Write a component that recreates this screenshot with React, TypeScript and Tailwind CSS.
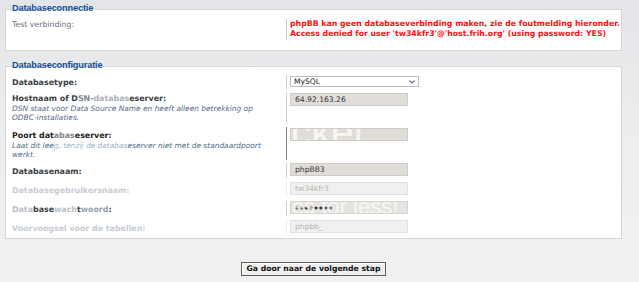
import React from "react"

const body = { fontFamily: '"DejaVu Sans", Verdana, sans-serif' }
const legendFont = { fontFamily: '"Liberation Sans", Arial, sans-serif' }

function Legend({ children }: { children: React.ReactNode }) {
  return (
    <div className="-mt-[7px] pl-[6px] text-[9.2px] leading-[10px] font-bold text-[#115098] tracking-[-0.15px]" style={legendFont}>
      {children}
    </div>
  )
}

function Field({
  value,
  tone = "dark",
  children,
}: {
  value?: string
  tone?: "dark" | "faded" | "pass"
  children?: React.ReactNode
}) {
  const cls =
    tone === "dark"
      ? "bg-[#e1ded9] border-[#cfccc7] text-[#333]"
      : tone === "pass"
        ? "bg-[#e6e4e0] border-[#d6d3cf] text-[#333]"
        : "bg-[#f1f0ee] border-[#e2e0dd] text-[#b4b4b4]"
  return (
    <div className={`relative overflow-hidden w-[118px] h-[13px] border pl-[4px] text-[7.6px] leading-[11px] ${cls}`}>
      {value}
      {children}
    </div>
  )
}

export default function App() {
  return (
    <div
      className="relative w-[639px] h-[282px] overflow-hidden bg-gradient-to-b from-[#e3e5e8] via-[#eceeef] to-[#f1f1f1]"
      style={body}
    >
      <div className="px-[5px] pt-[9px] w-[627px]">
        {/* Databaseconnectie */}
        <div className="bg-white border border-[#d6d6d6] pb-[11px]">
          <Legend>Databaseconnectie</Legend>
          <div className="flex mt-[6px]">
            <div className="w-[280px] shrink-0 pl-[6px] pt-[1px] text-[7.8px] leading-[10px] text-[#6b7480]">Test verbinding:</div>
            <div className="border-l border-[#c9c9c9] pl-[3px] text-[7.8px] leading-[10px] font-bold text-[#ff1010] whitespace-nowrap">
              <p>phpBB kan geen databaseverbinding maken, zie de foutmelding hieronder.</p>
              <p>Access denied for user 'tw34kfr3'@'host.frih.org' (using password: YES)</p>
            </div>
          </div>
        </div>

        {/* Databaseconfiguratie */}
        <div className="mt-[15px] bg-white border border-[#d6d6d6] pb-[3px]">
          <Legend>Databaseconfiguratie</Legend>

          {/* Databasetype */}
          <div className="flex mt-[5px] h-[14px]">
            <div className="w-[280px] shrink-0 pl-[6px] pt-[1px] text-[7.9px] leading-[13px] font-bold text-[#3a3d44]">Databasetype:</div>
            <div className="border-l border-[#d0d0d0] pl-[3px]">
              <div className="mt-[1px] w-[129px] h-[11px] border border-[#b9bcc2] bg-white flex items-center justify-between pl-[3px] pr-[3px] text-[7.6px] text-[#222]">
                <span>MySQL</span>
                <svg width="6" height="4" viewBox="0 0 6 4">
                  <polyline points="0.5,0.5 3,3 5.5,0.5" fill="none" stroke="#5a6f90" strokeWidth="1.1" />
                </svg>
              </div>
            </div>
          </div>

          {/* Hostnaam */}
          <div className="flex mt-[3px]">
            <div className="w-[280px] shrink-0 pl-[6px] pr-[8px] pt-[2px] pb-[1px]">
              <p className="text-[7.9px] leading-[10px] font-bold text-[#3a3d44]">
                Hostnaam of D<span className="text-[#7d838c]">SN-</span><span className="text-[#a9afb8]">databas</span>eserver:
              </p>
              <p className="text-[7.45px] leading-[9px] italic text-[#55698a]">
                DSN staat voor Data Source Name en heeft alleen betrekking op ODBC-installaties.
              </p>
            </div>
            <div className="border-l border-[#d0d0d0] pl-[3px]">
              <div className="mt-[1px]">
                <Field value="64.92.163.26" />
              </div>
            </div>
          </div>

          {/* Poort */}
          <div className="flex mt-[4px]">
            <div className="w-[280px] shrink-0 pl-[6px] pr-[8px] pt-[4px] pb-[1px]">
              <p className="text-[7.9px] leading-[10px] font-bold text-[#222]">
                Poort dat<span className="text-[#7d838c]">abas</span>eserver:
              </p>
              <p className="text-[7.45px] leading-[9px] italic text-[#55698a]">
                Laat dit lee<span className="text-[#a3b0c2]">g, tenzij de databas</span>eserver niet met de standaardpoort werkt.
              </p>
            </div>
            <div className="border-l border-[#7a7a7a] pl-[3px]">
              <div className="mt-[1px]">
                <Field>
                  {/* watermark fragment */}
                  <span
                    className="absolute left-[-22px] top-[-17px] text-[40px] leading-[40px] text-white/75 whitespace-nowrap"
                    style={legendFont}
                  >
                    ucket
                  </span>
                </Field>
              </div>
            </div>
          </div>

          {/* Databasenaam */}
          <div className="flex mt-[3px] h-[15px]">
            <div className="w-[280px] shrink-0 pl-[6px] pt-[2px] text-[7.9px] leading-[13px] font-bold text-[#3a3d44]">Databasenaam:</div>
            <div className="border-l border-[#d0d0d0] pl-[3px]">
              <Field value="phpBB3" />
            </div>
          </div>

          {/* Gebruikersnaam */}
          <div className="flex mt-[4px] h-[15px]">
            <div className="w-[280px] shrink-0 pl-[6px] pt-[2px] text-[7.9px] leading-[13px] font-bold text-[#c7ccd3]">Databasegebruikersnaam:</div>
            <div className="border-l border-[#ececec] pl-[3px]">
              <Field value="tw34kfr3" tone="faded" />
            </div>
          </div>

          {/* Wachtwoord */}
          <div className="flex mt-[4px] h-[15px]">
            <div className="w-[280px] shrink-0 pl-[6px] pt-[2px] text-[7.9px] leading-[13px] font-bold text-[#3a3d44]">
              <span className="text-[#b9bfc8]">Data</span>base<span className="text-[#b9bfc8]">wach</span>t<span className="text-[#9aa1ab]">woord</span>:
            </div>
            <div className="border-l border-[#d0d0d0] pl-[3px]">
              <Field tone="pass">
                <span className="relative text-[4px] tracking-[1.3px] text-[#3a3a3a] align-middle">●●●●●●●●</span>
                <span
                  className="absolute left-[-4px] top-[-6px] text-[22px] leading-[22px] text-white/65 whitespace-nowrap"
                  style={legendFont}
                >
                  ies for less!
                </span>
              </Field>
            </div>
          </div>

          {/* Voorvoegsel */}
          <div className="flex mt-[4px] h-[15px]">
            <div className="w-[280px] shrink-0 pl-[6px] pt-[2px] text-[7.9px] leading-[13px] font-bold text-[#c7ccd3]">Voorvoegsel voor de tabellen:</div>
            <div className="border-l border-[#ececec] pl-[3px]">
              <Field value="phpbb_" tone="faded" />
            </div>
          </div>
        </div>

        <div className="flex justify-center mt-[23px]">
          <button className="w-[145px] h-[14px] border border-[#5e5e5e] bg-[#efefef] text-[7.7px] leading-[12px] font-bold text-[#111] shadow-[inset_1px_1px_0_#fff]">
            Ga door naar de volgende stap
          </button>
        </div>
      </div>
    </div>
  )
}
